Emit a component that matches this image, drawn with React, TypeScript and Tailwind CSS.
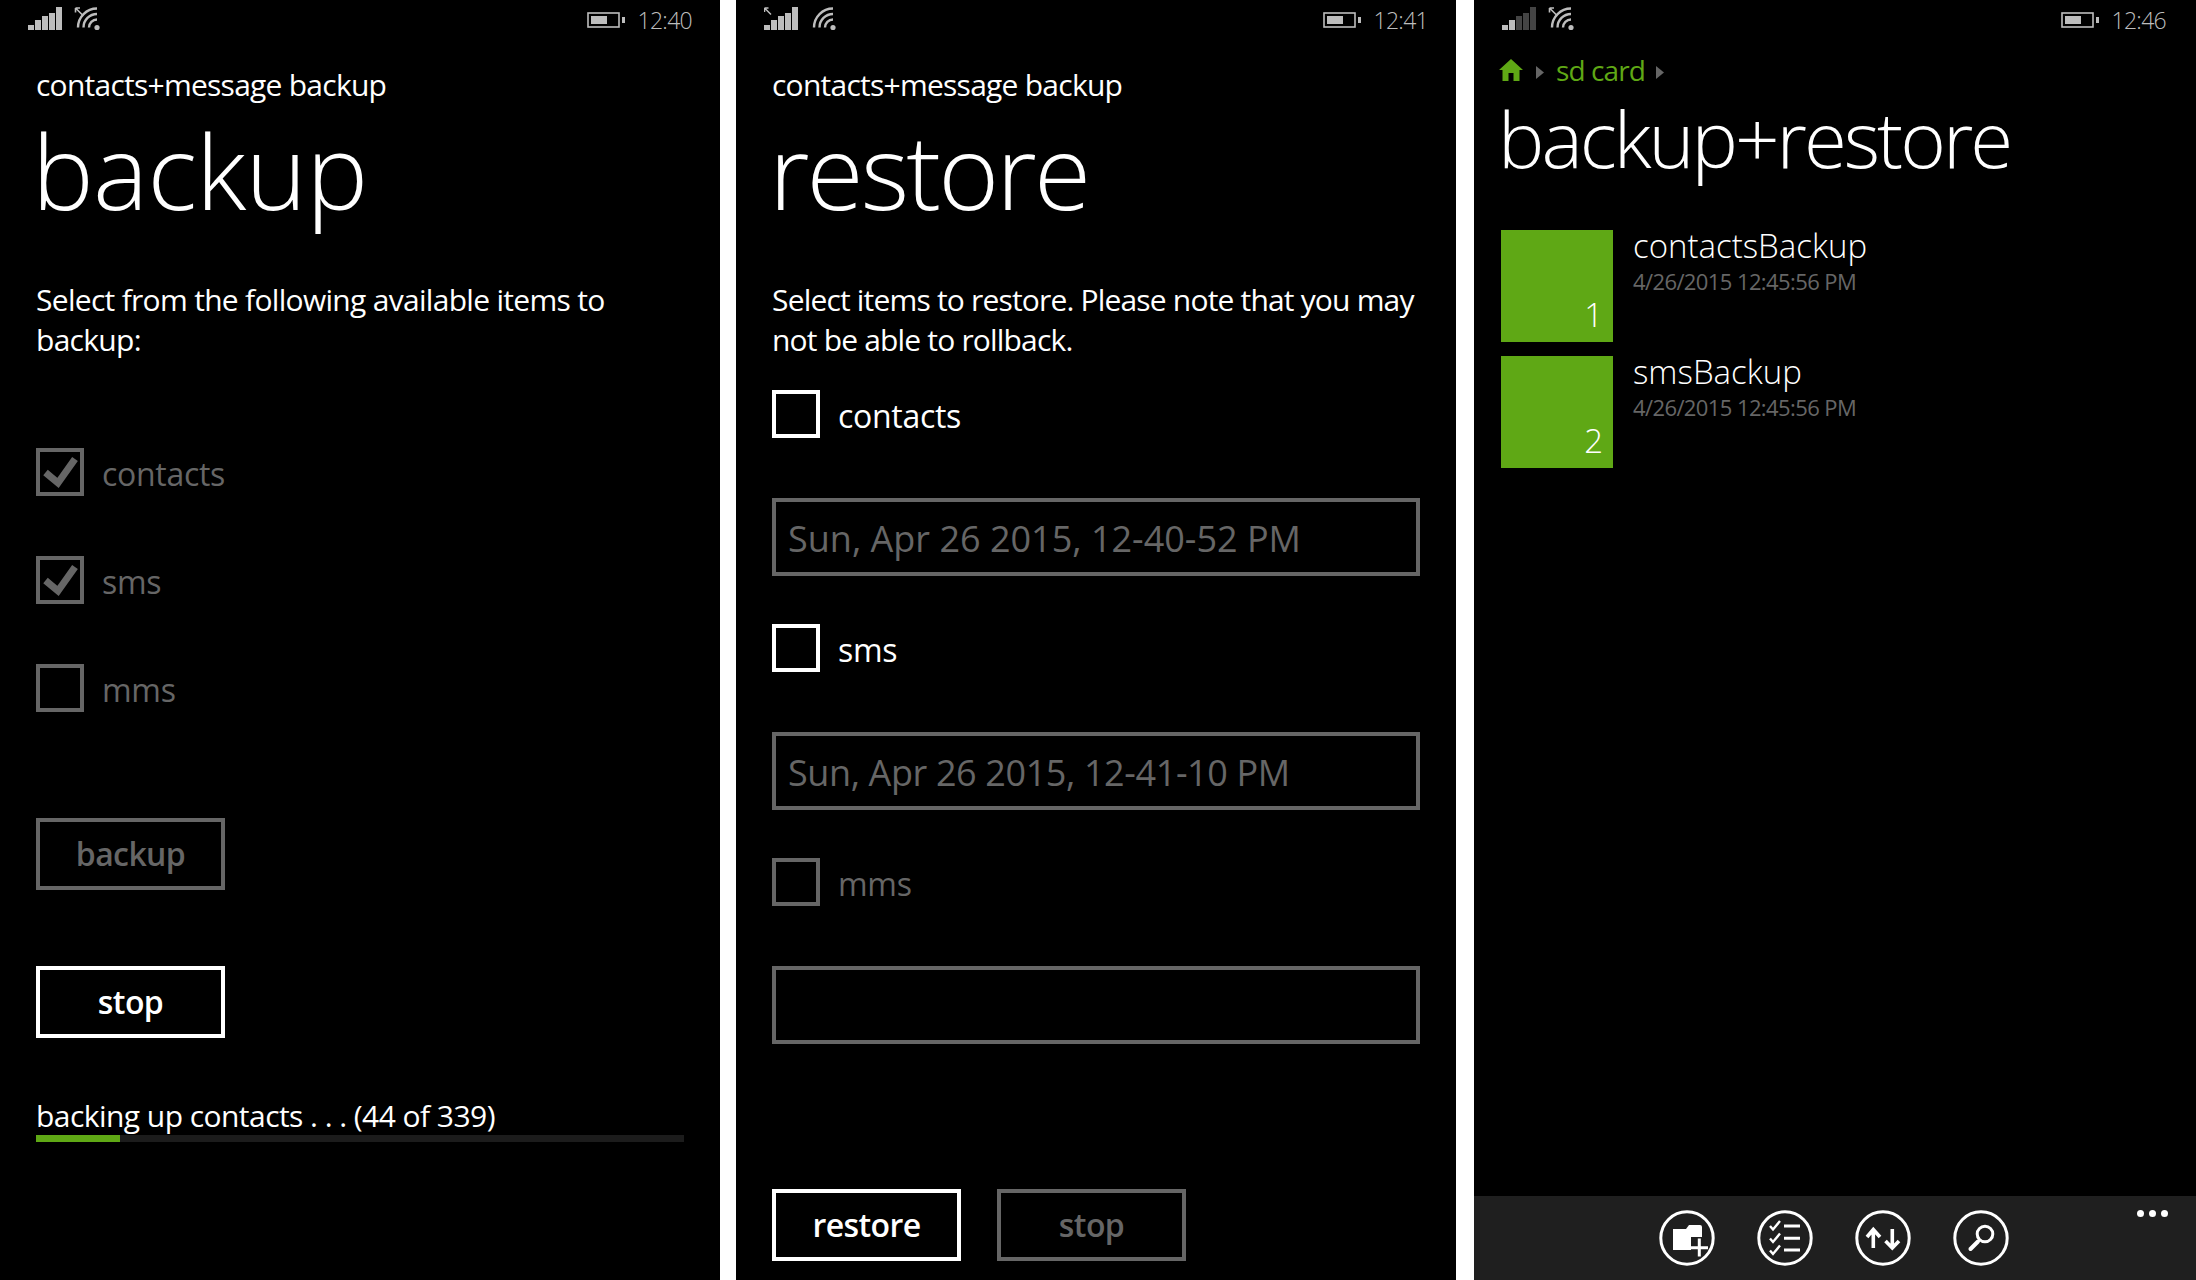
const font = { fontFamily: '"Open Sans", "Noto Sans", sans-serif' }

function Signal({ lit, arrow }: { lit: number; arrow?: boolean }) {
  const bars = [
    [0, 18, 5],
    [7, 13, 10],
    [14, 9, 14],
    [21, 6, 17],
    [28, 0, 23],
  ]
  return (
    <svg width="34" height="23" viewBox="0 0 34 23">
      {bars.map(([x, y, h], i) => (
        <rect key={x} x={x} y={y} width="6" height={h} fill={i < lit ? '#bdbdbd' : '#444444'} />
      ))}
      {arrow && <path d="M0.5 1L7 7.5M0.5 1V5M0.5 1H4.5" stroke="#bdbdbd" strokeWidth="1.5" fill="none" />}
    </svg>
  )
}

function Wifi({ arrow }: { arrow?: boolean }) {
  return (
    <svg width="26" height="24" viewBox="0 0 26 24" fill="none" stroke="#bdbdbd">
      <circle cx="23" cy="20.5" r="2.6" fill="#bdbdbd" stroke="none" />
      <path d="M15 20.5A8 8 0 0 1 23 12.5" strokeWidth="2.4" />
      <path d="M9.5 20.5A13.5 13.5 0 0 1 23 7" strokeWidth="2.4" />
      <path d="M4 20.5A19 19 0 0 1 23 1.5" strokeWidth="2.4" />
      {arrow && <path d="M1.5 1L9 8.5M1.5 1V5.5M1.5 1H6" strokeWidth="1.6" />}
    </svg>
  )
}

function Battery() {
  return (
    <svg width="38" height="16" viewBox="0 0 38 16" fill="none">
      <rect x="1" y="1" width="31" height="14" stroke="#bdbdbd" strokeWidth="1.6" />
      <rect x="4" y="4" width="16" height="8" fill="#bdbdbd" />
      <rect x="35" y="5" width="3" height="6" fill="#bdbdbd" />
    </svg>
  )
}

function StatusBar({
  time,
  lit,
  right,
  signalArrow,
}: {
  time: string
  lit: number
  right: string
  signalArrow?: boolean
}) {
  return (
    <div className={`flex h-[40px] shrink-0 items-start justify-between pt-[7px] pl-[28px] ${right}`}>
      <div className="flex items-start gap-[12px]">
        <Signal lit={lit} arrow={signalArrow} />
        <Wifi arrow={!signalArrow} />
      </div>
      <div className="mt-[-6px] flex items-center gap-[13px] pt-[7px]">
        <Battery />
        <span className="text-[23px] leading-[24px] font-light tracking-[-0.7px] text-[#bdbdbd]">{time}</span>
      </div>
    </div>
  )
}

function Check({ on, dim }: { on?: boolean; dim?: boolean }) {
  const c = dim ? '#666666' : '#ffffff'
  return (
    <span className={`flex h-[48px] w-[48px] shrink-0 items-center justify-center border-[4px] ${dim ? 'border-[#666666]' : 'border-white'}`}>
      {on && (
        <svg width="40" height="40" viewBox="0 0 40 40" fill="none">
          <path d="M5.5 20.5L18 31L35 7" stroke={c} strokeWidth="7" />
        </svg>
      )}
    </span>
  )
}

function CheckRow({ label, on, dim, className }: { label: string; on?: boolean; dim?: boolean; className?: string }) {
  return (
    <div className={`flex h-[48px] items-center gap-[18px] ${className ?? ''}`}>
      <Check on={on} dim={dim} />
      <span className={`pt-[3px] text-[32px] leading-[48px] tracking-[-0.3px] ${dim ? 'text-[#666666]' : 'text-white'}`}>{label}</span>
    </div>
  )
}

function WpButton({ label, dim, className }: { label: string; dim?: boolean; className?: string }) {
  return (
    <div
      className={`flex h-[72px] w-[189px] items-center justify-center border-[4px] text-[32px] font-semibold tracking-[-0.6px] ${
        dim ? 'border-[#666666] text-[#666666]' : 'border-white text-white'
      } ${className ?? ''}`}
    >
      {label}
    </div>
  )
}

function DateField({ value, className }: { value?: string; className?: string }) {
  return (
    <div className={`flex h-[78px] w-[648px] items-center border-[4px] border-[#666666] px-[12px] pt-[3px] text-[36px] text-[#666666] ${className ?? ''}`}>
      {value}
    </div>
  )
}

function Header({ title, className }: { title: string; className: string }) {
  return (
    <>
      <div className="mt-[25px] h-[40px] text-[30px] leading-[40px] tracking-[-0.75px] text-white">contacts+message backup</div>
      <div className={`mt-[5px] h-[120px] text-[104px] leading-[120px] font-light text-white ${className}`}>{title}</div>
    </>
  )
}

function BackupPanel() {
  return (
    <section className="flex h-full w-[720px] shrink-0 flex-col bg-black">
      <StatusBar time="12:40" lit={5} right="pr-[28px]" />
      <div className="flex flex-col px-[36px]">
        <Header title="backup" className="ml-[-4px] tracking-[-0.8px]" />
        <p className="mt-[50px] text-[30px] leading-[40px] tracking-[-0.7px] text-white">
          Select from the following available items to backup:
        </p>
        <CheckRow label="contacts" on dim className="mt-[88px]" />
        <CheckRow label="sms" on dim className="mt-[60px]" />
        <CheckRow label="mms" dim className="mt-[60px]" />
        <WpButton label="backup" dim className="mt-[106px]" />
        <WpButton label="stop" className="mt-[76px]" />
        <div className="mt-[58px] h-[39px] text-[30px] leading-[40px] tracking-[-0.55px] text-white">backing up contacts . . . (44 of 339)</div>
        <div className="h-[7px] w-[648px] bg-[#1c1c1c]">
          <div className="h-full w-[84px] bg-[#5fa815]" />
        </div>
      </div>
    </section>
  )
}

function RestorePanel() {
  return (
    <section className="flex h-full w-[720px] shrink-0 flex-col bg-black">
      <StatusBar time="12:41" lit={5} right="pr-[28px]" signalArrow />
      <div className="flex flex-col px-[36px]">
        <Header title="restore" className="ml-[-3px] tracking-[-2.9px]" />
        <p className="mt-[50px] text-[30px] leading-[40px] tracking-[-0.82px] text-white">
          Select items to restore. Please note that you may not be able to rollback.
        </p>
        <CheckRow label="contacts" className="mt-[30px]" />
        <DateField value="Sun, Apr 26 2015, 12-40-52 PM" className="mt-[60px]" />
        <CheckRow label="sms" className="mt-[48px]" />
        <DateField value="Sun, Apr 26 2015, 12-41-10 PM" className="mt-[60px] tracking-[-0.39px]" />
        <CheckRow label="mms" dim className="mt-[48px]" />
        <DateField className="mt-[60px]" />
        <div className="mt-[145px] flex gap-[36px]">
          <WpButton label="restore" />
          <WpButton label="stop" dim />
        </div>
      </div>
    </section>
  )
}

function FileRow({ label, count, className }: { label: string; count: number; className?: string }) {
  return (
    <div className={`flex gap-[20px] ${className ?? ''}`}>
      <div className="flex h-[112px] w-[112px] items-end justify-end bg-[#5fa815] px-[10px] pb-[5px] text-[33px] leading-[44px] font-light text-white">{count}</div>
      <div className="mt-[-1px] flex flex-col">
        <span className="h-[34px] text-[33px] leading-[34px] font-light text-white">{label}</span>
        <span className="mt-[3px] text-[22px] leading-[30px] tracking-[-0.6px] text-[#666666]">4/26/2015 12:45:56 PM</span>
      </div>
    </div>
  )
}

function Breadcrumb() {
  return (
    <div className="mt-[16px] flex h-[28px] items-center px-[25px]">
      <svg width="24" height="22" viewBox="0 0 24 22">
        <path d="M12 0L24 11H20.5V22H14.5V14H9.5V22H3.5V11H0Z" fill="#5fa815" />
      </svg>
      <svg className="mt-[5px] ml-[13px]" width="8" height="13" viewBox="0 0 8 13">
        <path d="M0 0L8 6.5L0 13Z" fill="#666666" />
      </svg>
      <span className="ml-[12px] text-[28px] leading-[28px] tracking-[-0.9px] text-[#5fa815]">sd card</span>
      <svg className="mt-[5px] ml-[11px]" width="8" height="13" viewBox="0 0 8 13">
        <path d="M0 0L8 6.5L0 13Z" fill="#666666" />
      </svg>
    </div>
  )
}

function Round({ children }: { children: React.ReactNode }) {
  return (
    <svg width="56" height="56" viewBox="0 0 56 56" fill="none" stroke="#fff" strokeWidth="3">
      <circle cx="28" cy="28" r="26.2" strokeWidth="3" />
      {children}
    </svg>
  )
}

function AppBar() {
  return (
    <div className="relative flex h-[84px] shrink-0 justify-center gap-[42px] bg-[#1f1f1f] pt-[14px] pr-[2px]">
      <Round>
        <path d="M14 19H27L30 15H41Q43 15 43 17V27H32V40H14Z" fill="#fff" stroke="none" />
        <path d="M40.3 28.5V46.5M31.5 37.7H49" strokeWidth="3" />
      </Round>
      <Round>
        <path d="M13 16L16 19.5L23 11M13 28.5L16 32L23 23.5M13 40.5L16 44L23 35.5" strokeWidth="2.4" />
        <path d="M27 16H43M27 28.3H43M27 40H43" />
      </Round>
      <Round>
        <path d="M18.3 38V19M12 27L18.3 19.5L25 27" strokeWidth="3.6" />
        <path d="M37.3 19V38M30.5 31L37.3 38L44 31" strokeWidth="3.6" />
      </Round>
      <Round>
        <circle cx="32" cy="24" r="7.8" />
        <path d="M25 31.5L17.5 39" strokeWidth="4" strokeLinecap="round" />
      </Round>
      <div className="absolute top-[14px] right-[28px] flex gap-[5px]">
        <span className="h-[7px] w-[7px] rounded-full bg-white" />
        <span className="h-[7px] w-[7px] rounded-full bg-white" />
        <span className="h-[7px] w-[7px] rounded-full bg-white" />
      </div>
    </div>
  )
}

function FilesPanel() {
  return (
    <section className="ml-[2px] flex h-full min-w-0 flex-1 flex-col bg-black">
      <StatusBar time="12:46" lit={2} right="pr-[30px]" />
      <Breadcrumb />
      <div className="mt-[4px] h-[100px] px-[24px] text-[78px] leading-[100px] font-light tracking-[-3px] text-white">backup+restore</div>
      <div className="mt-[42px] flex flex-1 flex-col px-[27px]">
        <FileRow label="contactsBackup" count={1} />
        <FileRow label="smsBackup" count={2} className="mt-[14px]" />
      </div>
      <AppBar />
    </section>
  )
}

export default function App() {
  return (
    <div className="flex h-[1280px] w-[2196px] gap-[16px] overflow-hidden bg-white" style={font}>
      <BackupPanel />
      <RestorePanel />
      <FilesPanel />
    </div>
  )
}
